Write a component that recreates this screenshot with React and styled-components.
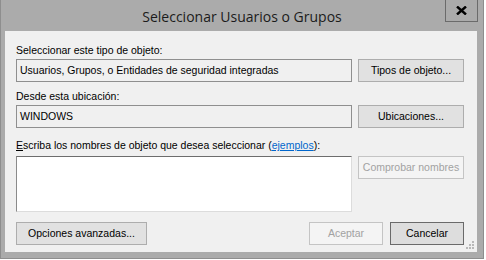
import React from 'react'
import styled, { createGlobalStyle } from 'styled-components'

const Global = createGlobalStyle`
  html, body { margin: 0; padding: 0; background: #ffffff; }
  body { font-family: "Liberation Sans", Arial, sans-serif; }
`

export default function App() {
  return (
    <>
      <Global />
      <Window>
        <TitleBar>
          <span />
          <Title>Seleccionar Usuarios o Grupos</Title>
          <CloseButton>
            <svg width="11" height="9" viewBox="0 0 11 9">
              <path d="M1 0.5 L10 8.5 M10 0.5 L1 8.5" stroke="#000" strokeWidth="2.4" />
            </svg>
          </CloseButton>
        </TitleBar>
        <Client>
          <Label>Seleccionar este tipo de objeto:</Label>
          <Row>
            <Field>Usuarios, Grupos, o Entidades de seguridad integradas</Field>
            <Button>Tipos de objeto...</Button>
          </Row>
          <Label $top={8}>Desde esta ubicación:</Label>
          <Row>
            <Field>WINDOWS</Field>
            <Button>Ubicaciones...</Button>
          </Row>
          <Label $top={11} $bottom={4}>
            <u>E</u>scriba los nombres de objeto que desea seleccionar (<Link>ejemplos</Link>):
          </Label>
          <Row>
            <TextBox />
            <Button disabled>Comprobar nombres</Button>
          </Row>
          <Footer>
            <Button $width={131}>Opciones avanzadas...</Button>
            <Actions>
              <Button $width={74} disabled>Aceptar</Button>
              <Button $width={74} $default>Cancelar</Button>
            </Actions>
          </Footer>
          <Grip width="9" height="9" viewBox="0 0 9 9">
            <g fill="#b8b8b8">
              <rect x="6" y="0" width="2" height="2" />
              <rect x="3" y="3" width="2" height="2" />
              <rect x="6" y="3" width="2" height="2" />
              <rect x="0" y="6" width="2" height="2" />
              <rect x="3" y="6" width="2" height="2" />
              <rect x="6" y="6" width="2" height="2" />
            </g>
          </Grip>
        </Client>
      </Window>
    </>
  )
}

const Window = styled.div`
  box-sizing: border-box;
  width: 484px;
  height: 259px;
  background: #ababab;
  border: 1px solid #8e8e8e;
  border-top: none;
  display: flex;
  flex-direction: column;
`

const TitleBar = styled.div`
  height: 31px;
  display: grid;
  grid-template-columns: 1fr auto 1fr;
  align-items: start;
`

const Title = styled.div`
  font-family: "Open Sans", "Noto Sans", sans-serif;
  font-size: 14px;
  color: #1b1b1b;
  line-height: 34px;
  white-space: nowrap;
`

const CloseButton = styled.div`
  justify-self: end;
  margin-right: 5px;
  width: 33px;
  height: 22px;
  box-sizing: border-box;
  border: 1px solid #6b6b6b;
  border-top: none;
  display: flex;
  align-items: center;
  justify-content: center;
`

const Client = styled.div`
  position: relative;
  flex: 1;
  margin: 0 6px 6px 4px;
  background: #f0f0f0;
  padding: 13px 13px 0 11px;
  font-size: 10.5px;
  color: #000;
`

const Label = styled.div`
  line-height: 13px;
  margin-top: ${p => p.$top || 0}px;
  margin-bottom: ${p => p.$bottom ?? 2}px;
  white-space: nowrap;
`

const Link = styled.span`
  color: #0066cc;
  text-decoration: underline;
`

const Row = styled.div`
  display: grid;
  grid-template-columns: 1fr 106px;
  column-gap: 6px;
  align-items: start;
`

const Field = styled.div`
  box-sizing: border-box;
  height: 23px;
  border: 1px solid #8f8f8f;
  background: #f0f0f0;
  padding: 0 3px;
  line-height: 21px;
  white-space: nowrap;
`

const TextBox = styled.div`
  box-sizing: border-box;
  height: 56px;
  background: #fff;
  border: 1px solid #dcdcdc;
  border-top-color: #6d6d6d;
  border-left-color: #8a8a8a;
`

const Button = styled.div`
  box-sizing: border-box;
  height: 23px;
  width: ${p => (p.$width ? `${p.$width}px` : 'auto')};
  border: 1px solid ${p => (p.disabled ? '#c4c4c4' : p.$default ? '#6a6a6a' : '#adadad')};
  background: ${p => (p.disabled ? '#f4f4f4' : p.$default ? '#dddddd' : '#e1e1e1')};
  color: ${p => (p.disabled ? '#a2a2a2' : '#000')};
  line-height: 21px;
  text-align: center;
  white-space: nowrap;
`

const Footer = styled.div`
  margin-top: 10px;
  display: flex;
  justify-content: space-between;
  align-items: center;
`

const Actions = styled.div`
  display: flex;
  gap: 7px;
`

const Grip = styled.svg`
  position: absolute;
  right: 2px;
  bottom: 2px;
`
